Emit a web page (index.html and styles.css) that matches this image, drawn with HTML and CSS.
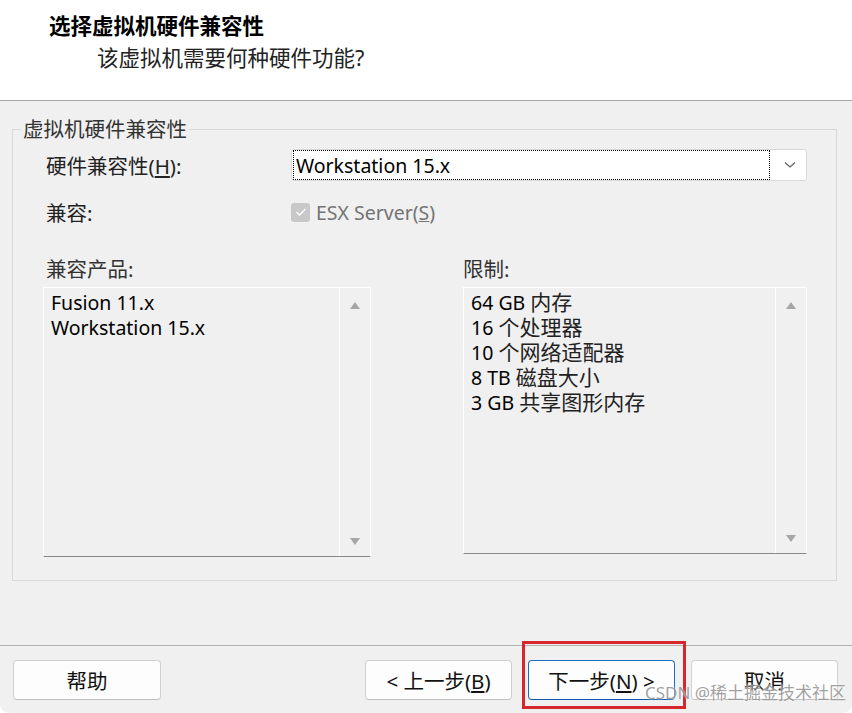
FILE: index.html
```html
<!DOCTYPE html>
<html lang="zh-CN">
<head>
    <meta charset="UTF-8">
    <title>新建虚拟机向导</title>
    <link rel="stylesheet" href="styles.css">
</head>
<body>
    <div class="dialog">
        <div class="header">
            <h2 class="title">选择虚拟机硬件兼容性</h2>
            <p class="subtitle">该虚拟机需要何种硬件功能?</p>
        </div>

        <div class="content">
            <fieldset class="group">
                <legend>虚拟机硬件兼容性</legend>

                <div class="row">
                    <span class="label">硬件兼容性(<u>H</u>):</span>
                    <div class="select">
                        <span class="select-text">Workstation 15.x</span>
                        <svg class="chevron" width="12" height="8" viewBox="0 0 12 8">
                            <path d="M1 1.5 L6 6 L11 1.5" fill="none" stroke="#606060" stroke-width="1.2"/>
                        </svg>
                    </div>
                </div>

                <div class="row row-check">
                    <span class="label">兼容:</span>
                    <label class="check">
                        <span class="box">
                            <svg width="12" height="10" viewBox="0 0 12 10">
                                <path d="M1.5 5 L4.5 8 L10.5 2" fill="none" stroke="#fff" stroke-width="1.3"/>
                            </svg>
                        </span>
                        <span>ESX Server(<u>S</u>)</span>
                    </label>
                </div>

                <div class="lists">
                    <div class="col col-left">
                        <div class="col-label">兼容产品:</div>
                        <div class="listbox">
                            <ul class="items">
                                <li>Fusion 11.x</li>
                                <li>Workstation 15.x</li>
                            </ul>
                            <div class="scroll">
                                <span class="arrow up"></span>
                                <span class="arrow down"></span>
                            </div>
                        </div>
                    </div>
                    <div class="col col-right">
                        <div class="col-label">限制:</div>
                        <div class="listbox">
                            <ul class="items">
                                <li>64 GB <span class="zh">内存</span></li>
                                <li>16 <span class="zh">个处理器</span></li>
                                <li>10 <span class="zh">个网络适配器</span></li>
                                <li>8 TB <span class="zh">磁盘大小</span></li>
                                <li>3 GB <span class="zh">共享图形内存</span></li>
                            </ul>
                            <div class="scroll">
                                <span class="arrow up"></span>
                                <span class="arrow down"></span>
                            </div>
                        </div>
                    </div>
                </div>
            </fieldset>
        </div>

        <div class="footer">
            <button class="btn">帮助</button>
            <div class="nav">
                <button class="btn">&lt; 上一步(<u>B</u>)</button>
                <button class="btn btn-next">下一步(<u>N</u>) &gt;
                    <span class="mark"></span>
                </button>
                <button class="btn">取消</button>
            </div>
        </div>

        <div class="watermark">CSDN @稀土掘金技术社区</div>
    </div>
</body>
</html>
```

FILE: styles.css
```css
body {
    margin: 0;
    background-color: #fff;
    font-family: "Noto Sans", "Noto Sans CJK SC", sans-serif;
    font-size: 19px;
    color: #111;
}

.dialog {
    width: 852px;
    height: 713px;
    display: flex;
    flex-direction: column;
    background-color: #f0f0f0;
    border-radius: 0 0 9px 9px;
    position: relative;
    overflow: hidden;
}

.header {
    height: 100px;
    background-color: #fff;
    border-bottom: 1px solid #a5a5a5;
}

.title {
    margin: 0;
    padding: 12px 0 0 49px;
    font-size: 21.5px;
    line-height: 28px;
    font-weight: bold;
    color: #000;
}

.subtitle {
    margin: 0;
    padding: 4px 0 0 97px;
    font-size: 21.5px;
    line-height: 28px;
    color: #222;
}

.content {
    flex: 1;
    padding: 0 15px 0 12px;
}

.group {
    margin: 16px 0 0;
    padding: 0 29px 23px 30px;
    border: 1px solid #d9d9d9;
}

.group legend {
    margin-left: -22px;
    padding: 0 2px;
    font-size: 20.5px;
    line-height: 24px;
    color: #333;
}

.row {
    display: flex;
    align-items: center;
    height: 32px;
    margin-top: 8px;
}

.row-check {
    margin-top: 15px;
}

.label {
    width: 248px;
    padding-left: 3px;
    box-sizing: border-box;
    font-size: 20.5px;
    color: #222;
}

.select {
    flex: 1;
    height: 32px;
    box-sizing: border-box;
    display: flex;
    align-items: center;
    background-color: #fff;
    border: 1px solid #dadada;
    border-radius: 3px;
}

.select-text {
    flex: 1;
    height: 28px;
    line-height: 30px;
    margin-left: 1px;
    padding-left: 2px;
    border: 1px dotted #000;
    font-size: 19.5px;
    color: #000;
}

.chevron {
    margin: 0 10px 0 14px;
}

.check {
    display: flex;
    align-items: center;
    gap: 6px;
    font-size: 19.5px;
    color: #737373;
}

.box {
    width: 19px;
    height: 19px;
    display: flex;
    justify-content: center;
    align-items: center;
    background-color: #c8c8c8;
    border-radius: 3px;
}

.lists {
    display: flex;
    gap: 92px;
    margin-top: 29px;
}

.col-left {
    width: 328px;
}

.col-right {
    flex: 1;
}

.col-label {
    line-height: 24px;
    margin-bottom: 6px;
    padding-left: 3px;
    font-size: 20.5px;
    color: #333;
}

.col-right .col-label {
    padding-left: 0;
}

.listbox {
    display: flex;
    height: 270px;
    box-sizing: border-box;
    border: 1px solid #fff;
    border-bottom-color: #8a8a8a;
}

.col-right .listbox {
    height: 267px;
}

.items {
    flex: 1;
    list-style: none;
    margin: 0;
    padding: 2px 0 0 7px;
    line-height: 25px;
    font-size: 19.5px;
    color: #000;
}

.items li {
    height: 25px;
}

.items .zh {
    display: inline-block;
    height: 25px;
    line-height: 25px;
    vertical-align: top;
    font-size: 21px;
    color: #222;
}

.scroll {
    width: 30px;
    border-left: 1px solid #fff;
    display: flex;
    flex-direction: column;
    justify-content: space-between;
    align-items: center;
    padding: 14px 0 11px;
}

.arrow {
    width: 0;
    height: 0;
    border-left: 5px solid transparent;
    border-right: 5px solid transparent;
}

.arrow.up {
    border-bottom: 7px solid #a6a6a6;
}

.arrow.down {
    border-top: 7px solid #a6a6a6;
}

.footer {
    height: 68px;
    box-sizing: border-box;
    border-top: 1px solid #b0b0b0;
    display: flex;
    justify-content: space-between;
    align-items: flex-start;
    padding: 14px 14px 0 13px;
}

.nav {
    display: flex;
    gap: 16px;
}

.btn {
    width: 147px;
    height: 40px;
    font-family: inherit;
    font-size: 20.5px;
    color: #111;
    background-color: #fdfdfd;
    border: 1px solid #d0d0d0;
    border-bottom-color: #c0c0c0;
    border-radius: 4px;
    position: relative;
}

.footer > .btn {
    width: 148px;
}

.btn-next {
    border-color: #1a6fc4;
    border-bottom-color: #0e5aa8;
}

.mark {
    position: absolute;
    left: -7px;
    top: -20px;
    width: 164px;
    height: 68px;
    box-sizing: border-box;
    border: 3px solid #d6272e;
}

.watermark {
    position: absolute;
    left: 645px;
    top: 682px;
    font-size: 17px;
    line-height: 22px;
    white-space: nowrap;
    color: rgba(130, 130, 130, 0.75);
    text-shadow: 0 0 2px #fff;
}
```
